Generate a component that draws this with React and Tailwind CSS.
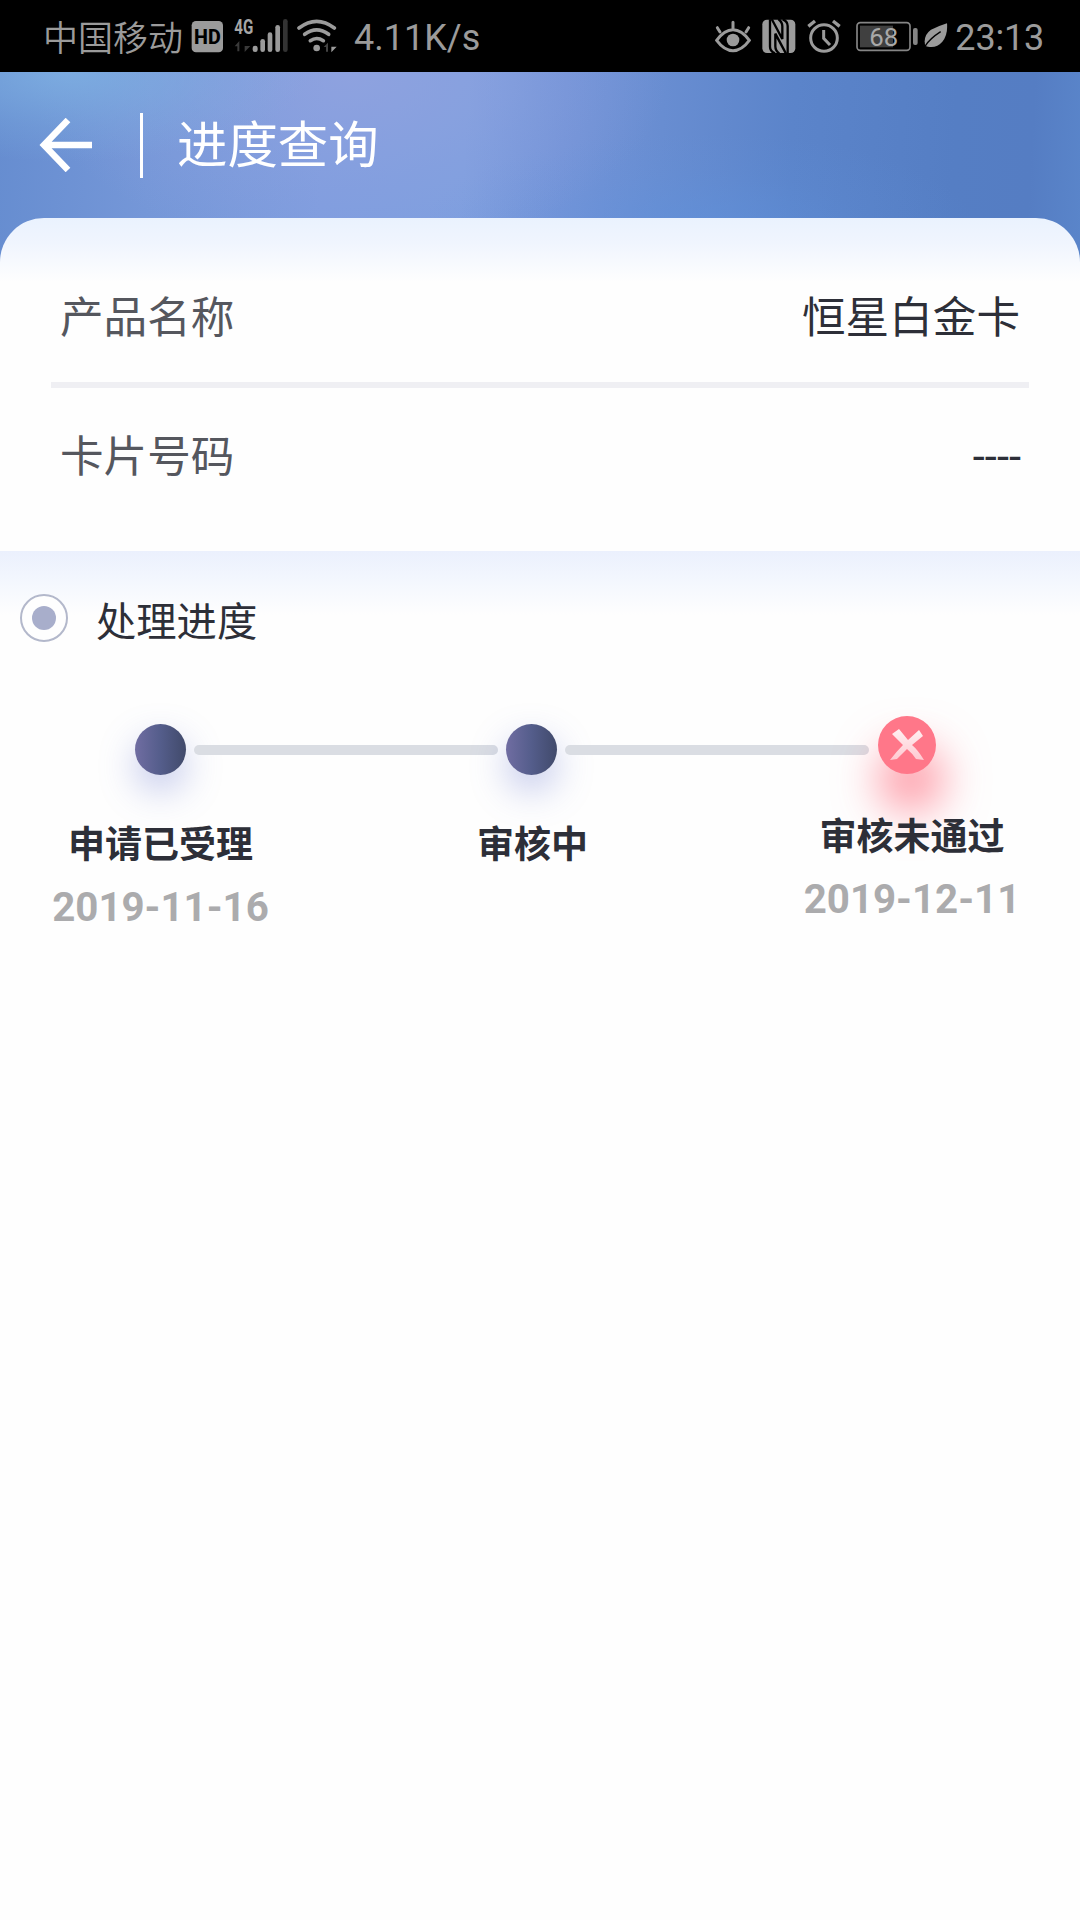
import React from 'react'

const infoRows = [
  { label: '产品名称', value: '恒星白金卡' },
  { label: '卡片号码', value: '----' },
]

const steps = [
  { title: '申请已受理', date: '2019-11-16', box: 'w-[321px] pt-[1px]', textBox: 'pt-[42px]' },
  { title: '审核中', date: '', box: 'w-[423px] pt-[1px]', textBox: 'pt-[42px]' },
  { title: '审核未通过', date: '2019-12-11', box: 'w-[336px]', textBox: 'pt-[35px]' },
]

// status bar icons, every one is as tall as the bar (216 units = 72px)
function HdIcon() {
  return (
    <svg className="ml-[10px] w-[32px] h-[72px]" viewBox="484 0 96 216">
      <rect x="486" y="63" width="94" height="94" rx="13" fill="#9b9b9b" />
      <text x="533" y="131" fontSize="62" fontWeight="800" textAnchor="middle" textLength="80" lengthAdjust="spacingAndGlyphs" fontFamily="Roboto, sans-serif" fill="#000">HD</text>
    </svg>
  )
}

function SignalIcon() {
  return (
    <svg className="ml-[11px] w-[54px] h-[72px]" viewBox="613 0 162 216">
      <text x="614" y="101" fontSize="60" fontWeight="700" textLength="57" lengthAdjust="spacingAndGlyphs" fontFamily="Roboto, sans-serif" fill="#a6a6a6">4G</text>
      <path d="M615 139l14-16v31h-6v-15zM645 123v15h17l-17 18z" fill="#3a3a3a" />
      <g fill="#9b9b9b">
        <rect x="669" y="137" width="15" height="19" rx="7" />
        <rect x="692" y="117" width="14" height="39" rx="7" />
        <rect x="714" y="97" width="14" height="59" rx="7" />
        <rect x="737" y="75" width="14" height="81" rx="7" />
      </g>
      <rect x="760" y="57" width="14" height="99" rx="7" fill="#333" />
    </svg>
  )
}

function WifiIcon() {
  return (
    <svg className="ml-[9px] w-[40px] h-[72px]" viewBox="802 0 120 216" fill="none">
      <g stroke="#9b9b9b" strokeWidth="11" strokeLinecap="round">
        <path d="M808 84Q861 44 914 84" />
        <path d="M825 103Q861 76 897 103" />
        <path d="M842 122Q861 109 881 122" />
      </g>
      <circle cx="861" cy="144" r="10" fill="#9b9b9b" />
      <path d="M882 141l13-13v27h-6v-14z" fill="#444" />
      <path d="M905 130v10h16l-16 17z" fill="#9b9b9b" />
    </svg>
  )
}

function EyeIcon() {
  return (
    <svg className="w-[36px] h-[72px]" viewBox="45 0 108 216" fill="none" stroke="#9b9b9b" strokeWidth="9" strokeLinecap="round">
      <path d="M50 121Q73 89 99 89T148 121Q125 152 99 152T50 121Z" />
      <path d="M99 67v18M52 83l8 13M146 83l-8 13" />
      <circle cx="99" cy="120" r="19" fill="#9b9b9b" stroke="none" />
    </svg>
  )
}

function NfcIcon() {
  return (
    <svg className="ml-[11px] w-[34px] h-[72px]" viewBox="188 0 102 216">
      <rect x="189" y="59" width="99" height="100" rx="14" fill="#9b9b9b" />
      <g fill="none" stroke="#000" strokeWidth="7">
        <path d="M212 58V140Q212 154 227 160" />
        <path d="M217 57L249 117V79Q249 66 237 57" />
        <path d="M260 161L228 101V139Q228 152 240 161" />
        <path d="M265 160V78Q265 64 250 58" />
      </g>
    </svg>
  )
}

function AlarmIcon() {
  return (
    <svg className="ml-[11px] w-[34px] h-[72px]" viewBox="323 0 102 216" fill="none" stroke="#9b9b9b" strokeWidth="9">
      <circle cx="374" cy="114" r="40" />
      <path d="M373 90v25l19 20" />
      <path d="M327 79l20-16M421 79l-20-16" strokeWidth="10" />
    </svg>
  )
}

function BatteryIcon() {
  return (
    <svg className="ml-[15px] w-[62px] h-[72px]" viewBox="469 0 186 216">
      <rect x="472" y="68" width="159" height="83" rx="10" fill="none" stroke="#858585" strokeWidth="5" />
      <rect x="481" y="77" width="99" height="65" fill="#404040" />
      <rect x="640" y="84" width="14" height="51" rx="6" fill="#858585" />
      <text x="552" y="137" fontSize="79" textAnchor="middle" textLength="87" lengthAdjust="spacingAndGlyphs" fontFamily="Roboto, sans-serif" fill="#a8a8a8">68</text>
    </svg>
  )
}

function LeafIcon() {
  return (
    <svg className="ml-[6px] w-[24px] h-[72px]" viewBox="672 0 72 216">
      <path d="M741 70Q744 104 727 125Q710 145 684 140L676 138Q668 107 693 89Q713 79 741 70Z" fill="#9b9b9b" />
      <path d="M675 139Q688 117 722 95" fill="none" stroke="#000" strokeWidth="4" />
    </svg>
  )
}

function StatusBar() {
  return (
    <div className="flex h-[72px] items-center bg-black text-[#9b9b9b]">
      <span className="ml-[43px] w-[138px] whitespace-nowrap text-[35px] leading-[72px] font-['Noto_Sans_CJK_SC',sans-serif] font-[350]">中国移动</span>
      <HdIcon />
      <SignalIcon />
      <WifiIcon />
      <span className="ml-[17px] pt-[4px] text-[36px] leading-[72px]">4.11K/s</span>
      <div className="ml-auto mr-[36px] flex items-center">
        <EyeIcon />
        <NfcIcon />
        <AlarmIcon />
        <BatteryIcon />
        <LeafIcon />
        <span className="ml-[7px] pt-[3px] text-[36px] leading-[72px] tracking-[-0.2px]">23:13</span>
      </div>
    </div>
  )
}

function Header() {
  return (
    <div className="flex h-[190px] items-start bg-[radial-gradient(ellipse_240px_90px_at_70px_0px,rgba(125,174,225,0.9)_0%,rgba(125,174,225,0.3)_60%,rgba(125,174,225,0)_100%),radial-gradient(ellipse_320px_180px_at_350px_0px,rgba(146,163,223,0.8)_0%,rgba(146,163,223,0.25)_60%,rgba(146,163,223,0)_100%),radial-gradient(ellipse_280px_100px_at_700px_160px,rgba(96,146,220,0.6)_0%,rgba(96,146,220,0.15)_60%,rgba(96,146,220,0)_100%),linear-gradient(93deg,#668dd0_0%,#7597d8_14%,#7f9ddf_30%,#7f9fdf_43%,#7494d8_52%,#688dd1_61%,#5b84ca_73%,#557ec4_88%,#557dc3_95%,#5a85ca_100%)]">
      <div className="flex h-[146px] items-center">
        <svg className="ml-[39px] w-[54px] h-[54px]" viewBox="0 0 54 54" fill="none" stroke="#fff" strokeWidth="6.5">
          <path d="M29 2L5 27L29 52M4 27H53" />
        </svg>
        <div className="ml-[47px] h-[65px] w-[3px] bg-white"></div>
        <h1 className="ml-[34px] pt-[2px] text-[50.4px] leading-[60px] text-white">进度查询</h1>
      </div>
    </div>
  )
}

function StepDot({ failed }) {
  if (failed) {
    return (
      <div className="flex size-[58px] items-center justify-center rounded-full bg-[#ff7789] shadow-[4px_34px_44px_4px_rgba(255,90,110,0.6)]">
        <svg className="w-[34px] h-[34px]" viewBox="0 0 34 34">
          <defs>
            <linearGradient id="cross" x1="0" y1="0" x2="0" y2="1">
              <stop offset="0" stopColor="#fff0f2" />
              <stop offset="1" stopColor="#ffc9d1" />
            </linearGradient>
          </defs>
          <path d="M2 6L9 1L18 12L29 2L33 8L22 17Q28 22 34 32L26 31Q23 26 17 21Q12 26 7 31L0 32Q6 24 13 17Z" fill="url(#cross)" />
        </svg>
      </div>
    )
  }
  return <div className="size-[51px] rounded-full bg-linear-to-r from-[#706da2] via-[#545d8b] to-[#414a6b] shadow-[0px_16px_36px_0px_rgba(100,115,205,0.38)]"></div>
}

function App() {
  return (
    <div className="min-h-[1920px] w-[1080px] overflow-hidden bg-[#fefefe] font-[Roboto,'Noto_Sans_CJK_SC',sans-serif] text-[#2d2f38]">
      <StatusBar />
      <Header />

      <div className="relative -mt-[44px] h-[333px] rounded-t-[44px] bg-[linear-gradient(#eaf2fe_0px,#f0f5fe_25px,#fefefe_64px)] px-[51px]">
        {infoRows.map((row, index) => {
          return (
            <div key={row.label} className={index === 0 ? 'flex h-[170px] items-center justify-between border-b-[6px] border-[#efeff3] pl-[9px] pr-[9px] pt-[38px]' : 'flex h-[135px] items-center justify-between pl-[9px] pr-[8px] pt-[5px]'}>
              <span className="text-[43.6px] leading-[60px] text-[#55575e]">{row.label}</span>
              <span className="text-[43.6px] leading-[60px]">{row.value}</span>
            </div>
          )
        })}
      </div>

      <div className="h-[155px] bg-[linear-gradient(#ebf0fd_0px,#f2f6fe_25px,#fefefe_64px)] pl-[20px] pt-[43px]">
        <div className="flex items-start">
          <div className="flex size-[48px] items-center justify-center rounded-full border-2 border-[#b3b8cb] bg-[#fefefe]">
            <div className="size-[24px] rounded-full bg-[#a8aecb]"></div>
          </div>
          <h2 className="ml-[28px] pt-[5px] text-[40.3px] leading-[48px]">处理进度</h2>
        </div>
      </div>

      {/* progress line */}
      <div className="mt-[10px] flex h-[67px] items-center pl-[135px]">
        <StepDot />
        <div className="mx-[8px] h-[10px] w-[304px] rounded-full bg-[#dadde3]"></div>
        <StepDot />
        <div className="ml-[8px] mr-[9px] h-[10px] w-[304px] rounded-full bg-[#dadde3]"></div>
        <div className="-mt-[9px]"><StepDot failed /></div>
      </div>

      <div className="relative flex text-center font-bold">
        {steps.map((step) => {
          return (
            <div key={step.title} className={step.box}>
              <div className={step.textBox}>
                <h3 className="text-[37px] leading-[40px]">{step.title}</h3>
                <p className="mt-[22px] text-[40.3px] leading-[40px] text-[#ababad]">{step.date}</p>
              </div>
            </div>
          )
        })}
      </div>
    </div>
  )
}

export default App
